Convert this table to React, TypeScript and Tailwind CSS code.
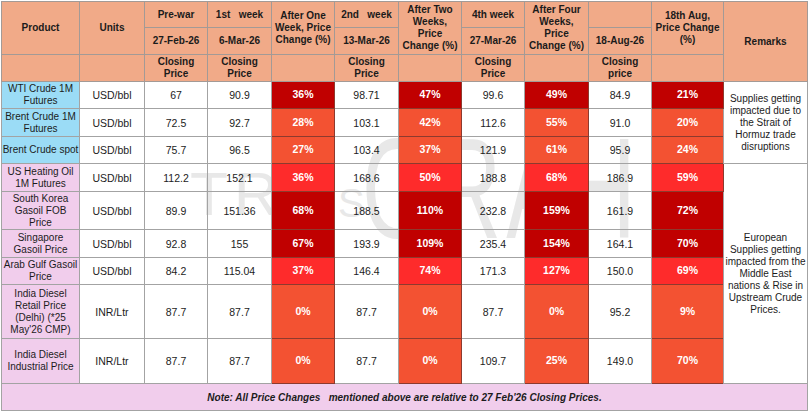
const font = { fontFamily: '"Liberation Sans", Arial, sans-serif' };

type Tone = "dark" | "orange" | "red";

const toneClass: Record<Tone, string> = {
  dark: "bg-[#c00000]",
  orange: "bg-[#f35232]",
  red: "bg-[#fe2b2b]",
};

type Row = {
  product: string[];
  blue: boolean;
  unit: string;
  h: string;
  vals: [string, string, string, string, string];
  pct: [string, string, string, string];
  tone: [Tone, Tone, Tone, Tone];
};

const rows: Row[] = [
  { product: ["WTI Crude 1M", "Futures"], blue: true, unit: "USD/bbl", h: "h-[27px]", vals: ["67", "90.9", "98.71", "99.6", "84.9"], pct: ["36%", "47%", "49%", "21%"], tone: ["dark", "dark", "dark", "dark"] },
  { product: ["Brent Crude 1M", "Futures"], blue: true, unit: "USD/bbl", h: "h-[28px]", vals: ["72.5", "92.7", "103.1", "112.6", "91.0"], pct: ["28%", "42%", "55%", "20%"], tone: ["orange", "orange", "orange", "orange"] },
  { product: ["Brent Crude spot"], blue: true, unit: "USD/bbl", h: "h-[27px]", vals: ["75.7", "96.5", "103.4", "121.9", "95.9"], pct: ["27%", "37%", "61%", "24%"], tone: ["orange", "orange", "orange", "orange"] },
  { product: ["US Heating Oil", "1M Futures"], blue: false, unit: "USD/bbl", h: "h-[28px]", vals: ["112.2", "152.1", "168.6", "188.8", "186.9"], pct: ["36%", "50%", "68%", "59%"], tone: ["red", "red", "red", "red"] },
  { product: ["South Korea", "Gasoil FOB", "Price"], blue: false, unit: "USD/bbl", h: "h-[38px]", vals: ["89.9", "151.36", "188.5", "232.8", "161.9"], pct: ["68%", "110%", "159%", "72%"], tone: ["dark", "dark", "dark", "dark"] },
  { product: ["Singapore", "Gasoil Price"], blue: false, unit: "USD/bbl", h: "h-[28px]", vals: ["92.8", "155", "193.9", "235.4", "164.1"], pct: ["67%", "109%", "154%", "70%"], tone: ["dark", "dark", "dark", "dark"] },
  { product: ["Arab Gulf Gasoil", "Price"], blue: false, unit: "USD/bbl", h: "h-[27px]", vals: ["84.2", "115.04", "146.4", "171.3", "150.0"], pct: ["37%", "74%", "127%", "69%"], tone: ["red", "red", "red", "red"] },
  { product: ["India Diesel", "Retail Price", "(Delhi) (*25", "May'26 CMP)"], blue: false, unit: "INR/Ltr", h: "h-[54px]", vals: ["87.7", "87.7", "87.7", "87.7", "95.2"], pct: ["0%", "0%", "0%", "9%"], tone: ["orange", "orange", "orange", "orange"] },
  { product: ["India Diesel", "Industrial Price"], blue: false, unit: "INR/Ltr", h: "h-[45px]", vals: ["87.7", "87.7", "87.7", "109.7", "149.0"], pct: ["0%", "0%", "25%", "70%"], tone: ["orange", "orange", "orange", "orange"] },
];

const widths = [78, 65, 63, 64, 63, 64, 63, 63, 64, 63, 72, 84];

const hd = "border border-[#a39a96] bg-[#f1aa88] text-center align-middle font-bold text-[10px] leading-[12px] text-[#1b1b1b] px-[2px]";
const td = "border border-[#a3a3a3] text-center align-middle text-[10.5px] leading-[12px] text-[#1c1c1c]";

function Pct({ v, tone }: { v: string; tone: Tone }) {
  return (
    <td className={`border border-[#8d3a2e] text-center align-middle text-[10.5px] font-bold text-white ${toneClass[tone]}`}>
      {v}
    </td>
  );
}

export default function App() {
  return (
    <div className="min-h-screen bg-white" style={font}>
      <div className="relative w-[808px] pl-[1px] pt-[1px]">
        {/* watermark */}
        <div className="pointer-events-none absolute inset-0 z-0 select-none text-[#e8e8e8]">
          <span className="absolute left-[190px] top-[163px] text-[62px] leading-none tracking-[6px]">TRA</span>
          <span className="absolute left-[338px] top-[183px] text-[40px] leading-none">S</span>
          <span className="absolute left-[362px] top-[118px] origin-left scale-x-[0.63] text-[142px] leading-none tracking-[8px]">GRAH</span>
        </div>

        <table className="relative z-10 table-fixed border-collapse">
          <colgroup>
            {widths.map((w, i) => (
              <col key={i} style={{ width: w }} />
            ))}
          </colgroup>
          <thead>
            <tr className="h-[26px]">
              <th rowSpan={2} className={hd}>Product</th>
              <th rowSpan={2} className={hd}>Units</th>
              <th className={hd}>Pre-war</th>
              <th className={`${hd} whitespace-pre`}>1st   week</th>
              <th rowSpan={2} className={hd}>After One Week, Price Change (%)</th>
              <th className={`${hd} whitespace-pre`}>2nd   week</th>
              <th rowSpan={2} className={hd}>After Two Weeks, Price Change (%)</th>
              <th className={hd}>4th week</th>
              <th rowSpan={2} className={hd}>After Four Weeks, Price Change (%)</th>
              <th className={hd}></th>
              <th rowSpan={2} className={hd}>18th Aug, Price Change (%)</th>
              <th rowSpan={3} className={hd}>Remarks</th>
            </tr>
            <tr className="h-[27px]">
              <th className={hd}>27-Feb-26</th>
              <th className={hd}>6-Mar-26</th>
              <th className={hd}>13-Mar-26</th>
              <th className={hd}>27-Mar-26</th>
              <th className={hd}>18-Aug-26</th>
            </tr>
            <tr className="h-[27px]">
              <th className={hd}></th>
              <th className={hd}></th>
              <th className={hd}>Closing Price</th>
              <th className={hd}>Closing Price</th>
              <th className={hd}></th>
              <th className={hd}>Closing Price</th>
              <th className={hd}></th>
              <th className={hd}>Closing Price</th>
              <th className={hd}></th>
              <th className={hd}>Closing price</th>
              <th className={hd}></th>
            </tr>
          </thead>
          <tbody>
            {rows.map((r, i) => (
              <tr key={r.product.join(" ")} className={r.h}>
                <td className={`whitespace-nowrap border border-[#a3a3a3] px-0 text-center align-middle text-[10px] leading-[12px] text-[#1c1c1c] ${r.blue ? "bg-[#9bdcf6]" : "bg-[#f1cdec]"}`}>
                  {r.product.map((line) => (
                    <div key={line}>{line}</div>
                  ))}
                </td>
                <td className={td}>{r.unit}</td>
                <td className={td}>{r.vals[0]}</td>
                <td className={td}>{r.vals[1]}</td>
                <Pct v={r.pct[0]} tone={r.tone[0]} />
                <td className={td}>{r.vals[2]}</td>
                <Pct v={r.pct[1]} tone={r.tone[1]} />
                <td className={td}>{r.vals[3]}</td>
                <Pct v={r.pct[2]} tone={r.tone[2]} />
                <td className={td}>{r.vals[4]}</td>
                <Pct v={r.pct[3]} tone={r.tone[3]} />
                {i === 0 && (
                  <td rowSpan={3} className={`${td} px-[3px] text-[10px] leading-[12.5px]`}>
                    Supplies getting impacted due to the Strait of Hormuz trade disruptions
                  </td>
                )}
                {i === 3 && (
                  <td rowSpan={6} className={`${td} px-[1px] text-[10px] leading-[12.5px]`}>
                    European Supplies getting impacted from the Middle East nations &amp; Rise in Upstream Crude Prices.
                  </td>
                )}
              </tr>
            ))}
            <tr className="h-[27px]">
              <td colSpan={12} className="whitespace-pre border border-[#a3a3a3] bg-[#f1cdec] text-center align-middle text-[10px] font-bold italic text-[#1c1c1c]">
                {"Note: All Price Changes   mentioned above are relative to 27 Feb'26 Closing Prices."}
              </td>
            </tr>
          </tbody>
        </table>
      </div>
    </div>
  );
}
